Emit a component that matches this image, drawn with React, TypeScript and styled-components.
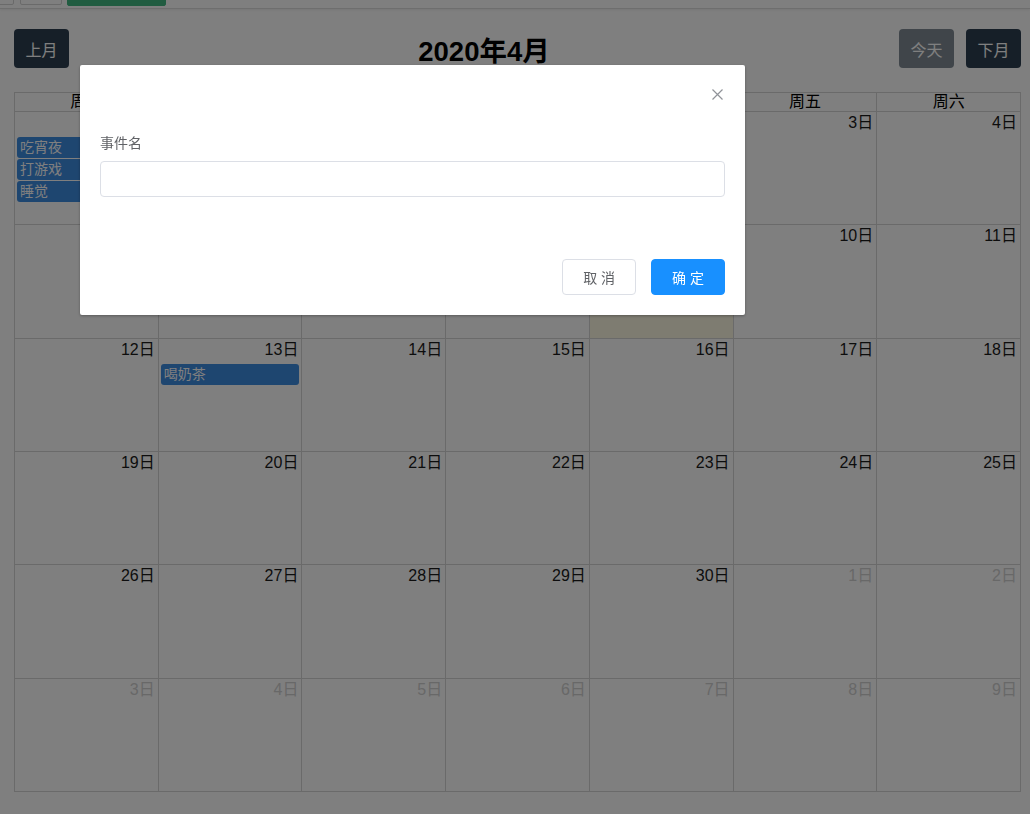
import React from "react";
import styled, { createGlobalStyle } from "styled-components";

const GlobalStyle = createGlobalStyle`
  html, body {
    margin: 0;
    padding: 0;
    background: #ffffff;
    font-family: "Liberation Sans", "Noto Sans CJK SC", sans-serif;
  }
  * { box-sizing: border-box; }
`;

const Page = styled.div`
  width: 1030px;
  min-height: 814px;
  display: flex;
  flex-direction: column;
`;

const Nav = styled.div`
  height: 9px;
  overflow: hidden;
  border-bottom: 1px solid #dcdcdc;
  box-shadow: 0 1px 3px rgba(0, 0, 0, 0.08);
  display: flex;
  align-items: flex-end;
`;

const NavButtons = styled.div`
  display: flex;
  align-items: flex-end;
  margin-left: -28px;
  padding-bottom: 3px;
`;

const NavButton = styled.div<{ $w: number; $gap: number; $green?: boolean }>`
  width: ${(p) => p.$w}px;
  height: 30px;
  margin-left: ${(p) => p.$gap}px;
  border: 1px solid ${(p) => (p.$green ? "#42b983" : "#d4d4d4")};
  background: ${(p) => (p.$green ? "#42b983" : "#ffffff")};
  border-radius: 2px;
  margin-bottom: ${(p) => (p.$green ? "-1px" : "0")};
`;

const Content = styled.div`
  padding: 20px 9px 0 14px;
  display: flex;
  flex-direction: column;
`;

const Header = styled.div`
  display: flex;
  align-items: center;
  height: 39px;
`;

const Title = styled.h1`
  flex: 1;
  margin: 0;
  text-align: center;
  font-size: 27.5px;
  font-weight: bold;
  color: #000;
  font-family: "Liberation Sans", "Noto Sans CJK SC", sans-serif;
`;

const RightGroup = styled.div`
  display: flex;
  gap: 12px;
`;

const NavBtn = styled.button<{ $disabled?: boolean }>`
  width: 55px;
  height: 39px;
  border: none;
  border-radius: 4px;
  background: #2c3e50;
  color: #ffffff;
  font-size: 16px;
  font-family: "Liberation Sans", "Noto Sans CJK SC", sans-serif;
  opacity: ${(p) => (p.$disabled ? 0.6 : 1)};
  padding: 0;
`;

const Grid = styled.div`
  margin-top: 24px;
  width: 1007px;
  display: grid;
  grid-template-columns: repeat(7, 1fr);
  grid-template-rows: 19px repeat(6, 113.33px);
  border-top: 1px solid #d4d4d4;
  border-left: 1px solid #d4d4d4;
`;

const HeadCell = styled.div`
  border-right: 1px solid #d4d4d4;
  border-bottom: 1px solid #d4d4d4;
  text-align: center;
  font-size: 16px;
  line-height: 18px;
  color: #000;
`;

const DayCell = styled.div<{ $today?: boolean }>`
  border-right: 1px solid #d4d4d4;
  border-bottom: 1px solid #d4d4d4;
  background: ${(p) => (p.$today ? "#fcf8e3" : "transparent")};
  display: flex;
  flex-direction: column;
  padding-top: 1px;
  overflow: hidden;
`;

const DayNum = styled.div<{ $other?: boolean }>`
  text-align: right;
  padding-right: 3px;
  font-size: 16px;
  line-height: 20px;
  height: 20px;
  color: ${(p) => (p.$other ? "#d0d0d0" : "#1a1a1a")};
  margin-bottom: 4px;
`;

const Events = styled.div`
  display: flex;
  flex-direction: column;
  gap: 1px;
  padding: 0 2px;
`;

const EventBar = styled.div`
  height: 21px;
  line-height: 21px;
  background: #3d8ce0;
  color: #ffffff;
  border-radius: 3px;
  font-size: 14px;
  padding-left: 3px;
  white-space: nowrap;
  overflow: hidden;
`;

const Overlay = styled.div`
  position: fixed;
  inset: 0;
  background: rgba(0, 0, 0, 0.5);
`;

const Dialog = styled.div`
  position: fixed;
  left: 80px;
  top: 65px;
  width: 665px;
  background: #ffffff;
  border-radius: 2px;
  box-shadow: 0 1px 3px rgba(0, 0, 0, 0.3);
  font-family: "Liberation Sans", "Noto Sans CJK SC", sans-serif;
`;

const DialogHeader = styled.div`
  position: relative;
  padding: 20px 20px 10px;
  height: 54px;
`;

const CloseBtn = styled.button`
  position: absolute;
  top: 21px;
  right: 20px;
  width: 16px;
  height: 16px;
  padding: 0;
  border: none;
  background: transparent;
  display: flex;
  align-items: center;
  justify-content: center;
`;

const DialogBody = styled.div`
  padding: 14px 20px 30px;
`;

const FormItem = styled.div`
  display: flex;
  flex-direction: column;
  margin-bottom: 22px;
`;

const Label = styled.label`
  font-size: 14px;
  line-height: 20px;
  color: #606266;
  margin-bottom: 8px;
`;

const Input = styled.input`
  height: 36px;
  width: 100%;
  border: 1px solid #dcdfe6;
  border-radius: 4px;
  padding: 0 15px;
  font-size: 14px;
  outline: none;
`;

const DialogFooter = styled.div`
  padding: 10px 20px 20px;
  display: flex;
  justify-content: flex-end;
  gap: 15px;
`;

const DlgButton = styled.button<{ $primary?: boolean }>`
  height: 36px;
  padding: 0 20px;
  border-radius: 4px;
  font-size: 14px;
  font-family: "Liberation Sans", "Noto Sans CJK SC", sans-serif;
  border: 1px solid ${(p) => (p.$primary ? "#1890ff" : "#dcdfe6")};
  background: ${(p) => (p.$primary ? "#1890ff" : "#ffffff")};
  color: ${(p) => (p.$primary ? "#ffffff" : "#606266")};
  white-space: pre;
`;

const weekdays = ["周日", "周一", "周二", "周三", "周四", "周五", "周六"];

type Day = { n: number; other?: boolean; today?: boolean; events?: string[] };

const days: Day[] = [];
[29, 30, 31].forEach((n) => days.push({ n, other: true }));
for (let i = 1; i <= 30; i++) days.push({ n: i });
for (let i = 1; i <= 9; i++) days.push({ n: i, other: true });
days[0].events = ["吃宵夜", "打游戏", "睡觉"];
days[11].today = true; // 9日
days[15].events = ["喝奶茶"]; // 13日

export default function App() {
  return (
    <Page>
      <GlobalStyle />
      <Nav>
        <NavButtons>
          <NavButton $w={42} $gap={0} />
          <NavButton $w={42} $gap={6} />
          <NavButton $w={99} $gap={5} $green />
        </NavButtons>
      </Nav>
      <Content>
        <Header>
          <NavBtn>上月</NavBtn>
          <Title>2020年4月</Title>
          <RightGroup>
            <NavBtn $disabled>今天</NavBtn>
            <NavBtn>下月</NavBtn>
          </RightGroup>
        </Header>
        <Grid>
          {weekdays.map((w) => (
            <HeadCell key={w}>{w}</HeadCell>
          ))}
          {days.map((d, i) => (
            <DayCell key={i} $today={d.today}>
              <DayNum $other={d.other}>{d.n}日</DayNum>
              {d.events && (
                <Events>
                  {d.events.map((e) => (
                    <EventBar key={e}>{e}</EventBar>
                  ))}
                </Events>
              )}
            </DayCell>
          ))}
        </Grid>
      </Content>
      <Overlay />
      <Dialog>
        <DialogHeader>
          <CloseBtn aria-label="close">
            <svg width="11" height="11" viewBox="0 0 11 11">
              <path d="M0.5 0.5 L10.5 10.5 M10.5 0.5 L0.5 10.5" stroke="#909399" strokeWidth="1.2" fill="none" />
            </svg>
          </CloseBtn>
        </DialogHeader>
        <DialogBody>
          <FormItem>
            <Label>事件名</Label>
            <Input />
          </FormItem>
        </DialogBody>
        <DialogFooter>
          <DlgButton>取 消</DlgButton>
          <DlgButton $primary>确 定</DlgButton>
        </DialogFooter>
      </Dialog>
    </Page>
  );
}
